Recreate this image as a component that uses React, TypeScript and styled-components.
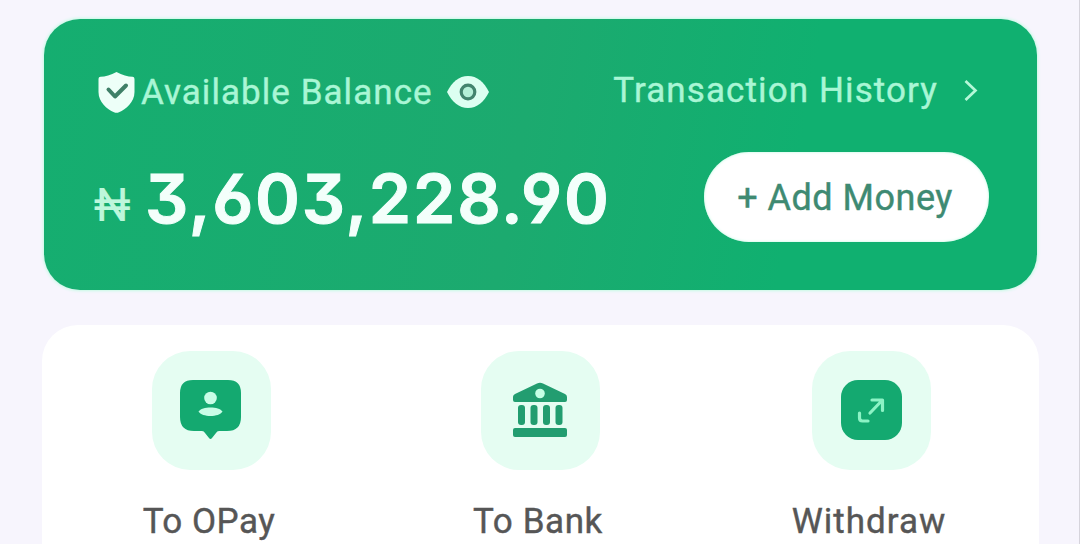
import styled, { createGlobalStyle } from "styled-components";

const GlobalStyle = createGlobalStyle`
  * {
    box-sizing: border-box;
  }
  body {
    margin: 0;
    background-color: #f7f5fd;
    font-family: Roboto, "Liberation Sans", sans-serif;
  }
`;

const Screen = styled.main`
  display: flex;
  flex-direction: column;
  gap: 35px;
  width: 1080px;
  height: 544px;
  padding: 19px 39px 0 42px;
  border-right: 1px solid #d6d4dc;
  overflow: hidden;
`;

const BalanceCard = styled.section`
  display: flex;
  flex-direction: column;
  flex: none;
  width: 993px;
  height: 271px;
  margin-left: 2px;
  padding: 42px 48px 0 50px;
  border-radius: 36px;
  background: linear-gradient(100deg, #15ae70 0%, #1caa6f 48%, #10b070 75%);
  box-shadow: 0 0 3px 1px #c4fbe4;
`;

const Row = styled.div<{ $height: number }>`
  display: flex;
  align-items: center;
  justify-content: space-between;
  height: ${(props) => props.$height}px;
`;

const Group = styled.div`
  display: flex;
  align-items: center;
`;

const Caption = styled.span<{ $spacing: number }>`
  padding-top: 1px;
  font-size: 35px;
  line-height: 40px;
  letter-spacing: ${(props) => props.$spacing}px;
  white-space: nowrap;
  color: #a9f6d5;
  -webkit-text-stroke: 0.4px #a9f6d5;
`;

const History = styled.a`
  display: flex;
  align-items: center;
  gap: 26px;
  margin: -3px 12px 0 0;
  text-decoration: none;
`;

const Balance = styled.div`
  display: flex;
  align-items: flex-start;
  padding-top: 1px;
  white-space: nowrap;
`;

const Currency = styled.span`
  width: 51px;
  padding-top: 20px;
  font-size: 46px;
  line-height: 54px;
  color: #bdf7db;
  -webkit-text-stroke: 0.2px #bdf7db;
`;

const Amount = styled.strong`
  font-family: Inter, Roboto, sans-serif;
  font-size: 68px;
  font-weight: 600;
  font-feature-settings: "cv03", "cv04", "cv09";
  line-height: 80px;
  letter-spacing: 1.8px;
  color: #f3fffb;
  -webkit-text-stroke: 1px #f3fffb;
`;

const AddButton = styled.button`
  width: 285px;
  height: 90px;
  padding: 1px 3px 0 0;
  border: none;
  border-radius: 45px;
  background-color: #fff;
  box-shadow: inset 0 0 3px #b9f8df;
  font-family: inherit;
  font-size: 36px;
  letter-spacing: 0.5px;
  color: #3e8a72;
  -webkit-text-stroke: 0.4px #3e8a72;
`;

const Actions = styled.section`
  display: grid;
  grid-template-columns: 329px 329px 333px;
  flex: 1;
  width: 997px;
  padding: 26px 0 0 5px;
  border-radius: 36px 36px 0 0;
  background-color: #fff;
`;

const Action = styled.div`
  display: flex;
  flex-direction: column;
  align-items: center;
`;

const Tile = styled.div`
  display: flex;
  align-items: center;
  justify-content: center;
  width: 119px;
  height: 119px;
  border-radius: 38px;
  background-color: #e5fdf2;
`;

const Label = styled.span<{ $spacing: number }>`
  margin: 31px 5px 0 0;
  font-size: 35px;
  line-height: 41px;
  letter-spacing: ${(props) => props.$spacing}px;
  white-space: nowrap;
  color: #565656;
  -webkit-text-stroke: 0.4px #565656;
`;

const Icon = styled.svg`
  display: block;
  flex: none;
  overflow: visible;
`;

const ShieldIcon = styled(Icon)`
  margin: 0 6px 0 4px;
`;

const EyeIcon = styled(Icon)`
  margin: -1px 0 0 14px;
`;

const TileIcon = styled(Icon)<{ $shift?: number }>`
  margin: -1px ${(props) => props.$shift ?? 2}px 0 0;
`;

const GREEN = "#14a970";

function App() {
  return (
    <>
      <GlobalStyle />
      <Screen>
        <BalanceCard>
          <Row $height={62}>
            <Group>
              <ShieldIcon width="37" height="41" viewBox="0 0 37 41">
                <path
                  d="M18.5 0C13 3.2 7 4.6 2.5 4.8C1 5 .5 6 .5 7.5V20C.5 30 9 37.5 16 40.3Q18.5 41.3 21 40.3C28 37.5 36.5 30 36.5 20V7.5C36.5 6 36 5 34.5 4.8C30 4.6 24 3.2 18.5 0Z"
                  fill="#edfff8"
                />
                <path
                  d="M10.5 17.5L17 24.5L28 13.5"
                  fill="none"
                  stroke="#3f8068"
                  strokeWidth="4"
                  strokeLinecap="round"
                  strokeLinejoin="round"
                />
              </ShieldIcon>
              <Caption $spacing={1.05}>Available Balance</Caption>
              <EyeIcon width="42" height="34" viewBox="0 0 42 34">
                <path
                  d="M0 17C5 7 12 1 21 1S37 7 42 17C37 27 30 33 21 33S5 27 0 17Z"
                  fill="#dcfff1"
                />
                <circle cx="21" cy="17" r="6.8" fill="#b5f0d8" stroke="#43846e" strokeWidth="3.2" />
              </EyeIcon>
            </Group>
            <History>
              <Caption $spacing={1.1}>Transaction History</Caption>
              <Icon width="13" height="21" viewBox="0 0 13 21">
                <path d="M1.5 1L11.5 10.5L1.5 20" fill="none" stroke="#b5f8d8" strokeWidth="2.7" />
              </Icon>
            </History>
          </Row>
          <Row $height={148}>
            <Balance>
              <Currency>₦</Currency>
              <Amount>3,603,228.90</Amount>
            </Balance>
            <AddButton>+ Add Money</AddButton>
          </Row>
        </BalanceCard>
        <Actions>
          <Action>
            <Tile>
              <TileIcon width="61" height="60" viewBox="0 0 61 60">
                <path
                  d="M13 0H48Q61 0 61 13V37Q61 51 47 51H39Q37 51 36 53L32 58Q30.5 60 29 58L25 53Q24 51 22 51H14Q0 51 0 37V13Q0 0 13 0Z"
                  fill={GREEN}
                />
                <circle cx="30.5" cy="18" r="6.3" fill="#c9fde7" />
                <path d="M18.5 31.5C22 26 39 26 42.5 31.5C39 37.5 22 37.5 18.5 31.5Z" fill="#c9fde7" />
              </TileIcon>
            </Tile>
            <Label $spacing={0.5}>To OPay</Label>
          </Action>
          <Action>
            <Tile>
              <TileIcon width="54" height="56" viewBox="0 0 54 56">
                <path
                  d="M2 12L24 1.5Q27 0 30 1.5L52 12Q54 13 54 15V18Q54 20 52 20H2Q0 20 0 18V15Q0 13 2 12Z"
                  fill="#229d70"
                />
                <circle cx="27" cy="11.5" r="4.8" fill="#c5ffe5" />
                {[5, 17.5, 30, 42.5].map((x) => (
                  <rect key={x} x={x} y="23" width="7" height="20" rx="3" fill="#229d70" />
                ))}
                <rect y="46" width="54" height="9" rx="2" fill="#229d70" />
              </TileIcon>
            </Tile>
            <Label $spacing={0.6}>To Bank</Label>
          </Action>
          <Action>
            <Tile>
              <TileIcon $shift={0} width="61" height="60" viewBox="0 0 61 60">
                <rect width="61" height="60" rx="17" fill={GREEN} />
                <path
                  d="M31 20H41.5V30.5M41 20.5L29 33M18.5 33V38Q18.5 41 21.5 41H27"
                  fill="none"
                  stroke="#8cf3c5"
                  strokeWidth="3.2"
                  strokeLinecap="round"
                  strokeLinejoin="round"
                />
              </TileIcon>
            </Tile>
            <Label $spacing={1}>Withdraw</Label>
          </Action>
        </Actions>
      </Screen>
    </>
  );
}

export default App;
